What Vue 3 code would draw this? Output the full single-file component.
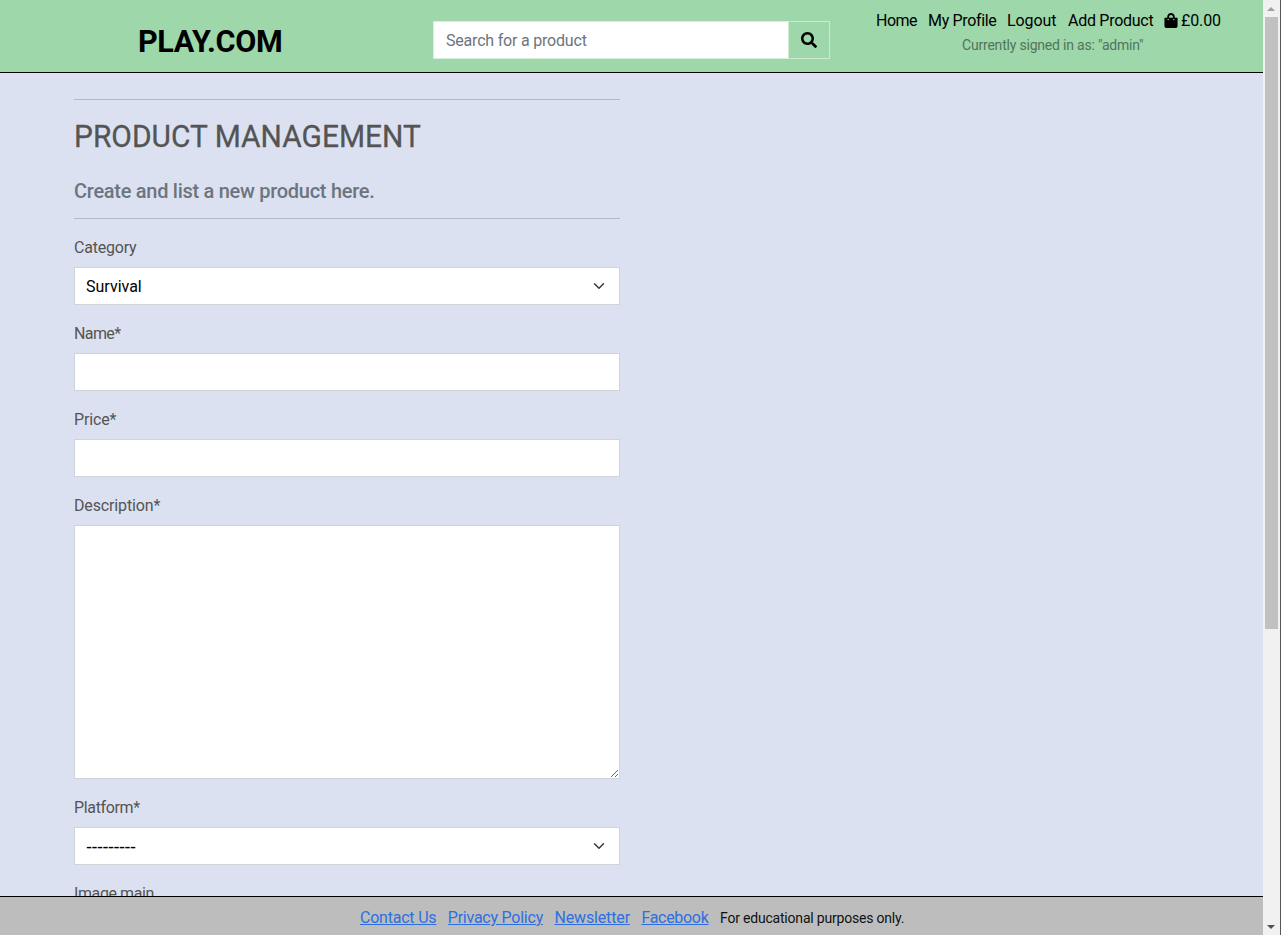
<script setup>
import { ref } from 'vue'

const category = ref('Survival')
const platform = ref('')
const search = ref('')
</script>

<template>
  <div class="window">
    <div class="page">
      <header class="header">
        <div class="brand"><a class="logo">PLAY.COM</a></div>
        <form class="search" @submit.prevent>
          <input v-model="search" type="text" placeholder="Search for a product" />
          <button type="submit" aria-label="Search">
            <svg viewBox="0 0 512 512" width="16" height="16"><path d="M505 442.700 405.300 343c-4.500-4.500-10.600-7-17-7H372c27.600-35.300 44-79.700 44-128C416 93.100 322.900 0 208 0S0 93.100 0 208s93.100 208 208 208c48.300 0 92.700-16.400 128-44v16.300c0 6.400 2.500 12.500 7 17l99.700 99.700c9.400 9.400 24.600 9.400 33.900 0l28.300-28.300c9.400-9.400 9.400-24.600.1-34zM208 336c-70.700 0-128-57.200-128-128 0-70.700 57.200-128 128-128 70.700 0 128 57.200 128 128 0 70.700-57.200 128-128 128z" /></svg>
          </button>
        </form>
        <div class="account">
          <nav class="links">
            <a class="home">Home</a>
            <a class="profile">My Profile</a>
            <a class="logout">Logout</a>
            <a class="add">Add Product</a>
            <a class="bag">
              <svg viewBox="0 0 448 512" width="14" height="16"><path d="M352 160v-32C352 57.420 294.579 0 224 0 153.420 0 96 57.420 96 128v32H0v272c0 44.183 35.817 80 80 80h288c44.183 0 80-35.817 80-80V160h-96zm-192-32c0-35.290 28.710-64 64-64s64 28.710 64 64v32H160v-32zm160 120c-13.255 0-24-10.745-24-24s10.745-24 24-24 24 10.745 24 24-10.745 24-24 24zm-192 0c-13.255 0-24-10.745-24-24s10.745-24 24-24 24 10.745 24 24-10.745 24-24 24z" /></svg>
              <span>£0.00</span>
            </a>
          </nav>
          <p class="signed">Currently signed in as: "admin"</p>
        </div>
      </header>

      <main class="content">
        <hr />
        <h2>PRODUCT MANAGEMENT</h2>
        <h5>Create and list a new product here.</h5>
        <hr />
        <form class="form" @submit.prevent>
          <label for="category" class="l-category">Category</label>
          <div class="select">
            <select id="category" v-model="category"><option>Survival</option></select>
            <svg class="chevron" viewBox="0 0 16 16" width="12" height="12"><path d="m2 5 6 6 6-6" /></svg>
          </div>
          <label for="name" class="l-name">Name*</label>
          <input id="name" type="text" />
          <label for="price" class="l-price">Price*</label>
          <input id="price" type="text" />
          <label for="description" class="l-description">Description*</label>
          <textarea id="description"></textarea>
          <label for="platform" class="l-platform">Platform*</label>
          <div class="select">
            <select id="platform" v-model="platform" class="dashes"><option value="">---------</option></select>
            <svg class="chevron" viewBox="0 0 16 16" width="12" height="12"><path d="m2 5 6 6 6-6" /></svg>
          </div>
          <label class="l-image">Image main</label>
        </form>
      </main>

      <footer class="footer">
        <a class="contact">Contact Us</a>
        <a class="privacy">Privacy Policy</a>
        <a class="news">Newsletter</a>
        <a class="facebook">Facebook</a>
        <small>For educational purposes only.</small>
      </footer>
    </div>
    <div class="scrollbar">
      <svg class="arrow" viewBox="0 0 16 17" width="16" height="17"><path d="M4 11h8L8 7z" fill="#a0a0a0" /></svg>
      <div class="thumb"></div>
      <svg class="arrow down" viewBox="0 0 16 17" width="16" height="17"><path d="M4 7h8l-4 4z" fill="#505050" /></svg>
    </div>
  </div>
</template>

<style>
html, body { margin: 0; overflow: hidden; }
</style>

<style scoped>
* { box-sizing: border-box; }
.window { display: flex; width: 1281px; height: 935px; font: 16px/24px Roboto, sans-serif; color: #545454; overflow: hidden; }
.page { width: 1263px; height: 935px; display: flex; flex-direction: column; background: #dce1f1; }
.header { flex: 0 0 73px; display: flex; background: #9dd7aa; border-bottom: 1px solid #000; color: #000; }
.brand { width: 433px; padding: 22px 0 0 138px; }
.logo { display: inline-block; font-size: 32px; line-height: 38px; font-weight: 700; white-space: nowrap; letter-spacing: -0.4px; transform: scaleX(0.955); transform-origin: left; }
.search { display: flex; width: 397px; height: 38px; margin-top: 21px; }
input, textarea, select { display: block; border: 1px solid #ced4da; border-radius: 0; background: #fff; font: inherit; color: #000; outline: none; margin: 0; padding: 6px 12px; }
.search input { width: 355px; height: 38px; border-color: #d9eedd; border-right: 0; letter-spacing: -0.2px; }
.search input::placeholder { color: #6c757d; opacity: 1; }
.search button { width: 42px; height: 38px; display: flex; align-items: center; justify-content: center; padding: 0; border: 1px solid #cdebd3; background: #9dd7aa; }
.account { flex: 1; padding-top: 9px; }
.links { display: flex; padding-left: 46px; height: 24px; white-space: nowrap; }
.home { width: 52px; letter-spacing: -0.5px; }
.profile { width: 79px; letter-spacing: -0.33px; }
.logout { width: 61px; letter-spacing: -0.1px; }
.add { width: 97px; letter-spacing: -0.27px; }
.bag { display: flex; letter-spacing: -0.1px; }
.bag svg { margin: 4px 3px 0 -1px; width: 14px; height: 15px; }
.signed { margin: 1px 0 0 132px; font-size: 14px; line-height: 22px; letter-spacing: -0.2px; color: #53745b; white-space: nowrap; }
.content { flex: 1; min-height: 0; overflow: hidden; width: 620px; padding: 26px 0 0 74px; }
hr { height: 1px; margin: 0; border: 0; background: #b2b9cf; }
h2 { width: max-content; margin: 17px 0 0; font-size: 32px; line-height: 38px; font-weight: 400; white-space: nowrap; -webkit-text-stroke: 0.3px #545454; transform: scaleX(0.935); transform-origin: left; }
h5 { margin: 24px 0 15px; font-size: 20px; line-height: 24px; font-weight: 500; letter-spacing: -0.28px; color: #6c757d; white-space: nowrap; }
.form { padding-top: 17px; }
.form label { display: block; width: max-content; height: 24px; margin-bottom: 7px; }
.l-category { letter-spacing: -0.2px; }
.l-name { letter-spacing: -0.6px; }
.l-price { letter-spacing: -0.15px; }
.l-description { letter-spacing: -0.14px; }
.l-platform { letter-spacing: -0.35px; }
.l-image { letter-spacing: -0.4px; }
.form input { width: 100%; height: 38px; margin-bottom: 17px; }
.form textarea { width: 100%; height: 254px; margin-bottom: 17px; resize: vertical; }
.select { position: relative; margin-bottom: 17px; }
select { width: 100%; height: 38px; appearance: none; padding: 7px 12px 5px 11px; }
select.dashes { font-family: "Liberation Sans", sans-serif; font-size: 18px; letter-spacing: -0.5px; }
.chevron { position: absolute; right: 15px; top: 13px; fill: none; stroke: #343a40; stroke-width: 2; stroke-linecap: round; stroke-linejoin: round; }
.footer { flex: 0 0 39px; display: flex; padding: 9px 0 0 360px; background: #bdbdbd; border-top: 1px solid #000; white-space: nowrap; }
.footer a { color: #2d6fe0; text-decoration: underline; margin-right: 11.5px; }
.contact { letter-spacing: -0.22px; }
.privacy { letter-spacing: -0.24px; }
.news { letter-spacing: -0.15px; }
.facebook { letter-spacing: -0.3px; }
.footer small { font-size: 14px; letter-spacing: -0.2px; color: #111; }
.scrollbar { width: 18px; display: flex; flex-direction: column; background: #f1f1f1; border-right: 1px solid #55555a; }
.arrow { display: block; flex: none; }
.down { margin-top: auto; }
.thumb { width: 13px; height: 612px; margin-left: 2px; background: #c1c1c1; }
</style>
